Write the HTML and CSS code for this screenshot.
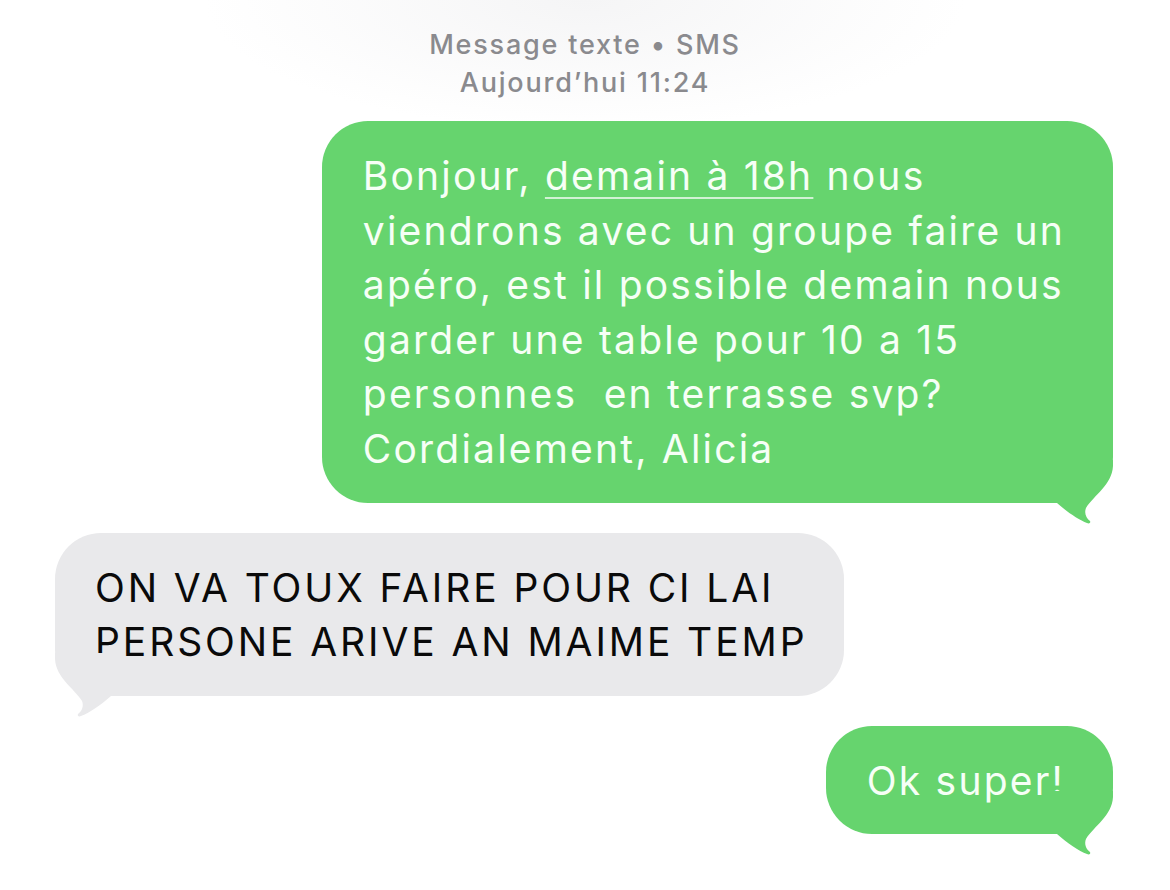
FILE: index.html
```html
<!DOCTYPE html>
<html>
<head>
  <meta content="text/html; charset=UTF-8" http-equiv="content-type" />
  <title>Messages</title>
<link rel="stylesheet" href="styles.css">
</head>
<body>
  <div id="thread">
    <div class="meta">
      <div>Message texte • SMS</div>
      <div>Aujourd’hui 11:24</div>
    </div>

    <div class="row sent">
      <div class="bubble">
        Bonjour, <span class="link">demain à 18h</span> nous<br>
        viendrons avec un groupe faire un<br>
        apéro, est il possible demain nous<br>
        garder une table pour 10 a 15<br>
        personnes&nbsp; en terrasse svp?<br>
        Cordialement, Alicia
        <svg class="tail" width="64" height="64" viewBox="0 0 64 64">
          <path d="M0,0 H64 V6 C63,25 45,35 37,48 C35,53 37,58 41,61 C42,63 40,64 38,63 C30,60 18,52 8,43 H0 Z" />
        </svg>
      </div>
    </div>

    <div class="row received">
      <div class="bubble">
        ON VA TOUX FAIRE POUR CI LAI<br>
        PERSONE ARIVE AN MAIME TEMP
        <svg class="tail" width="64" height="64" viewBox="0 0 64 64">
          <path d="M0,0 H64 V6 C63,25 45,35 37,48 C35,53 37,58 41,61 C42,63 40,64 38,63 C30,60 18,52 8,43 H0 Z" />
        </svg>
      </div>
    </div>

    <div class="row sent">
      <div class="bubble">
        Ok super!
        <svg class="tail" width="64" height="64" viewBox="0 0 64 64">
          <path d="M0,0 H64 V6 C63,25 45,35 37,48 C35,53 37,58 41,61 C42,63 40,64 38,63 C30,60 18,52 8,43 H0 Z" />
        </svg>
      </div>
    </div>
  </div>
</body>
</html>
```

FILE: styles.css
```css
body {
  margin: 0px;
  background: #FFFFFF;
  font-family: "Inter", "Noto Sans", sans-serif;
}
#thread {
  width: 1170px;
  height: 890px;
  overflow: hidden;
  background: radial-gradient(ellipse 380px 130px at 50% 0px, #f5f5f6, #ffffff);
}
.meta {
  padding-top: 26px;
  text-align: center;
  font-size: 27px;
  font-weight: 500;
  letter-spacing: 1.8px;
  line-height: 38px;
  color: #8a8a8e;
}
.row {
  display: flex;
}
.row.sent {
  justify-content: flex-end;
  padding-right: 57px;
}
.row.received {
  justify-content: flex-start;
  padding-left: 55px;
}
.meta + .row {
  margin-top: 19px;
}
.row + .row {
  margin-top: 30px;
}
.bubble {
  position: relative;
  font-size: 39px;
  line-height: 54.6px;
  border-radius: 46px;
  white-space: nowrap;
}
.sent .bubble {
  background: #66d46e;
  color: #f6fff6;
  letter-spacing: 2.2px;
  padding: 28px 48px 26px 41px;
}
.received .bubble {
  background: #e9e9eb;
  color: #0a0a0a;
  letter-spacing: 2.9px;
  padding: 28px 37px 26px 40px;
}
.link {
  text-decoration: underline;
  text-decoration-thickness: 1.5px;
  text-decoration-color: rgba(255, 255, 255, 0.7);
  text-underline-offset: 7px;
}
/* tails */
.tail {
  position: absolute;
  bottom: -21px;
}
.sent .tail {
  right: 0px;
  fill: #66d46e;
}
.received .tail {
  left: 0px;
  fill: #e9e9eb;
  transform: scaleX(-1);
}
```
